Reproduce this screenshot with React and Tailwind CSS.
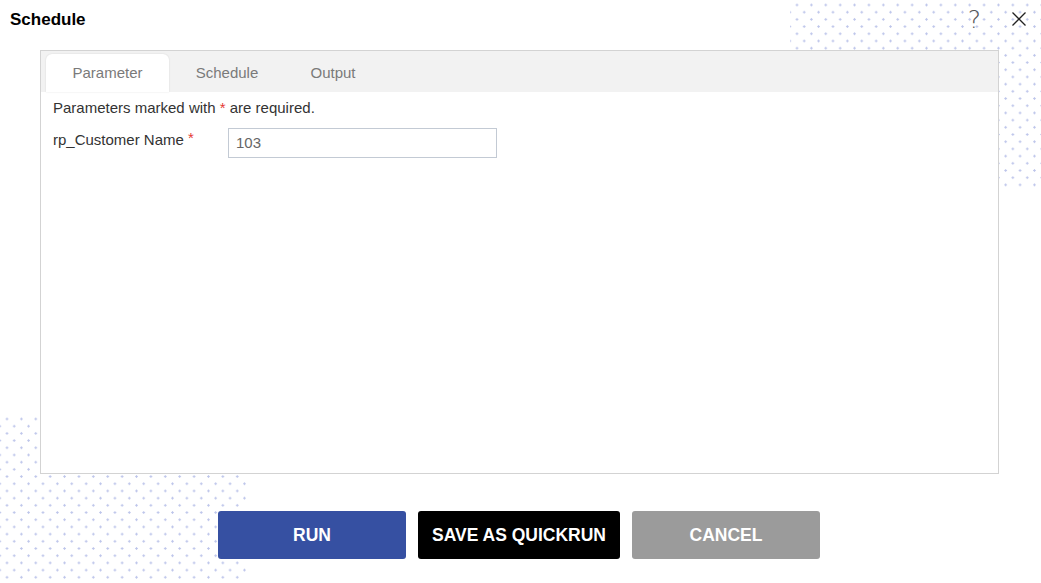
import { useState } from "react";

const dots =
  "bg-[radial-gradient(circle,#bcc4ea_0.9px,transparent_1.4px),radial-gradient(circle,#bcc4ea_0.9px,transparent_1.4px)] bg-[length:14.4px_14.4px] bg-[position:7px_5px,14.2px_12.2px]";

export default function App() {
  const [tab, setTab] = useState("Parameter");
  const [value, setValue] = useState("103");
  const tabs = ["Parameter", "Schedule", "Output"];

  return (
    <div className="relative w-[1041px] h-[583px] overflow-hidden bg-white font-['Liberation_Sans',Arial,sans-serif]">
      {/* decorative dot patterns */}
      <div className={`absolute left-[790px] top-0 w-[251px] h-[187px] ${dots}`} />
      <div className={`absolute left-0 top-[414px] w-[246px] h-[169px] ${dots}`} />

      <div className="relative flex flex-col h-full">
        <div className="flex items-center justify-between h-[40px] pl-[10px] pr-[14px]">
          <h1 className="text-[17px] font-bold text-black">Schedule</h1>
          <div className="flex items-center gap-[30px]">
            <span className="text-[25px] font-['DejaVu_Sans',sans-serif] font-extralight leading-none text-[#555] mt-[-1px]">?</span>
            <svg width="16" height="16" viewBox="0 0 16 16" className="mt-[-2px]">
              <path d="M1.5 1.5 L14.5 14.5 M14.5 1.5 L1.5 14.5" stroke="#222" strokeWidth="1.3" fill="none" />
            </svg>
          </div>
        </div>

        <div className="ml-[40px] mt-[10px] w-[959px] h-[424px] border border-[#d3d3d3] bg-white flex flex-col">
          <div className="flex items-end h-[41px] bg-[#f2f2f2] pl-[5px]">
            {tabs.map((t) =>
              t === tab ? (
                <button
                  key={t}
                  onClick={() => setTab(t)}
                  className="w-[123px] h-[38px] bg-white rounded-t-[6px] shadow-[0_0_2px_rgba(0,0,0,0.12)] text-[15px] text-[#7a7a7a]"
                >
                  {t}
                </button>
              ) : (
                <button
                  key={t}
                  onClick={() => setTab(t)}
                  className={`h-[38px] text-[15px] text-[#7a7a7a] ${t === "Schedule" ? "w-[116px]" : "w-[96px]"}`}
                >
                  {t}
                </button>
              )
            )}
          </div>
          <div className="px-[12px] pt-[5px] text-[15px] text-[#333]">
            <p>
              Parameters marked with <span className="text-[#e53935]">*</span> are required.
            </p>
            <div className="flex items-start mt-[8px]">
              <label className="w-[175px] pt-[1px]">
                rp_Customer Name <span className="text-[#e53935] relative top-[-2px]">*</span>
              </label>
              <input
                value={value}
                onChange={(e) => setValue(e.target.value)}
                className="w-[269px] h-[30px] border border-[#c3cad4] px-[7px] text-[15px] text-[#666] outline-none"
              />
            </div>
          </div>
        </div>

        <div className="flex justify-center gap-[12px] mt-[37px] pr-[3px]">
          <button className="w-[188px] h-[48px] rounded-[3px] bg-[#3650a2] text-white font-bold text-[17.5px]">RUN</button>
          <button className="w-[202px] h-[48px] rounded-[3px] bg-black text-white font-bold text-[17.5px]">SAVE AS QUICKRUN</button>
          <button className="w-[188px] h-[48px] rounded-[3px] bg-[#9b9b9b] text-white font-bold text-[17.5px]">CANCEL</button>
        </div>
      </div>
    </div>
  );
}
